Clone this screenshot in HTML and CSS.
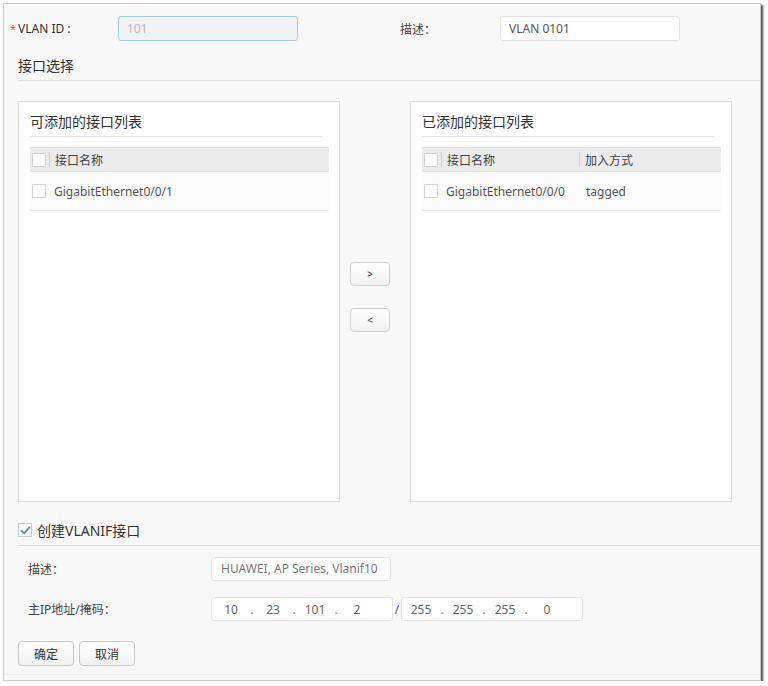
FILE: index.html
```html
<!DOCTYPE html>
<html lang="zh">
<head>
<meta charset="utf-8">
<title>VLAN</title>
<link rel="stylesheet" href="styles.css">
</head>
<body>
<div class="dialog">
  <div class="top-row">
    <span class="req">*</span>
    <span class="lbl lbl-id">VLAN ID :</span>
    <div class="field field-disabled">101</div>
    <span class="lbl lbl-desc">描述：</span>
    <div class="field">VLAN 0101</div>
  </div>

  <div class="section-title">接口选择</div>

  <div class="transfer">
    <div class="panel">
      <div class="panel-title">可添加的接口列表</div>
      <div class="table">
        <div class="thead">
          <span class="cb"></span>
          <span class="sep"></span>
          <span class="th th-name">接口名称</span>
        </div>
        <div class="trow">
          <span class="cb"></span>
          <span class="td td-name">GigabitEthernet0/0/1</span>
        </div>
      </div>
    </div>

    <div class="mid">
      <button class="arrow-btn">&gt;</button>
      <button class="arrow-btn">&lt;</button>
    </div>

    <div class="panel">
      <div class="panel-title">已添加的接口列表</div>
      <div class="table">
        <div class="thead">
          <span class="cb"></span>
          <span class="sep"></span>
          <span class="th th-name">接口名称</span>
          <span class="sep sep2"></span>
          <span class="th">加入方式</span>
        </div>
        <div class="trow">
          <span class="cb"></span>
          <span class="td td-name">GigabitEthernet0/0/0</span>
          <span class="td td-mode">tagged</span>
        </div>
      </div>
    </div>
  </div>

  <div class="vlanif">
    <span class="cb cb-checked">
      <svg width="11" height="11" viewBox="0 0 11 11"><path d="M1.5 5.8 L4.2 8.4 L9.6 2.2" fill="none" stroke="#3f8fd6" stroke-width="1.8" stroke-linecap="round" stroke-linejoin="round"/></svg>
    </span>
    <span class="vlanif-text">创建VLANIF接口</span>
  </div>

  <div class="form-row row-desc">
    <span class="form-lbl">描述：</span>
    <div class="field field-long">HUAWEI, AP Series, Vlanif10</div>
  </div>

  <div class="form-row row-ip">
    <span class="form-lbl">主IP地址/掩码：</span>
    <div class="ip ip-addr">
      <span class="oct">10</span><span class="dot">.</span><span class="oct">23</span><span class="dot">.</span><span class="oct">101</span><span class="dot">.</span><span class="oct">2</span>
    </div>
    <span class="slash">/</span>
    <div class="ip ip-mask">
      <span class="oct">255</span><span class="dot">.</span><span class="oct">255</span><span class="dot">.</span><span class="oct">255</span><span class="dot">.</span><span class="oct">0</span>
    </div>
  </div>

  <div class="actions">
    <button class="btn">确定</button>
    <button class="btn">取消</button>
  </div>
</div>
</body>
</html>
```

FILE: styles.css
```css
* { box-sizing: border-box; }

html, body {
  margin: 0;
  padding: 0;
  background: #ffffff;
}

body {
  font-family: "Noto Sans", "Noto Sans CJK SC", sans-serif;
  font-size: 12px;
  color: #333;
}

.dialog {
  margin: 3px 0 0 3px;
  width: 758px;
  height: 678px;
  border: 1px solid #c8c8c8;
  background: #f8f8f8;
  box-shadow: 2px 2px 2px rgba(40, 40, 40, 0.85);
  padding-top: 12px;
  position: relative;
}

.dialog::after {
  content: "";
  position: absolute;
  left: 0;
  right: 0;
  bottom: 5px;
  border-top: 1px solid #ececec;
}

/* top row */
.top-row {
  display: flex;
  align-items: center;
  height: 25px;
  padding-left: 6px;
}

.req {
  color: #d9534f;
  width: 8px;
  font-size: 11px;
}

.lbl { color: #333; }
.lbl-id { width: 100px; }
.lbl-desc { width: 100px; margin-left: 102px; color: #444; }

.field {
  width: 180px;
  height: 25px;
  border: 1px solid #e3e3e3;
  border-radius: 3px;
  background: #fff;
  color: #555;
  line-height: 23px;
  padding-left: 8px;
  white-space: nowrap;
  overflow: hidden;
}

.field-disabled {
  border-color: #9fcbe8;
  background: #f1f2f3;
  color: #b8b8b8;
}

/* section title */
.section-title {
  margin: 15px 0 0 14px;
  height: 25px;
  line-height: 20px;
  font-size: 14px;
  color: #333;
  border-bottom: 1px solid #e2e2e2;
}

/* transfer */
.transfer {
  display: flex;
  margin: 20px 0 0 14px;
  height: 401px;
}

.panel {
  width: 322px;
  height: 401px;
  border: 1px solid #dddddd;
  background: #ffffff;
  padding: 10px 0 0 11px;
}

.panel-title {
  width: 292px;
  height: 25px;
  line-height: 20px;
  font-size: 14px;
  color: #333;
  border-bottom: 1px solid #e6e6e6;
}

.table {
  margin-top: 10px;
  width: 299px;
}

.thead {
  display: flex;
  align-items: center;
  height: 25px;
  background: #ebebeb;
  border-top: 1px solid #e0e0e0;
  border-bottom: 1px solid #e2e2e2;
  padding-left: 2px;
}

.trow {
  display: flex;
  align-items: center;
  height: 39px;
  background: #fbfbfb;
  border-bottom: 1px solid #e6e6e6;
  padding-left: 2px;
}

.cb {
  display: inline-flex;
  align-items: center;
  justify-content: center;
  width: 14px;
  height: 14px;
  border: 1px solid #d4d4d4;
  background: #fff;
  flex: none;
}

.sep {
  width: 1px;
  height: 15px;
  background: #d0d0d0;
  margin-left: 3px;
  flex: none;
}

.th { color: #444; }
.th-name { margin-left: 5px; width: 132px; }
.sep2 { margin-left: 0; }
.sep2 + .th { margin-left: 5px; }

.td { color: #555; }
.td-name { margin-left: 8px; width: 132px; white-space: nowrap; }
.td-mode { margin-left: 8px; }

.mid {
  width: 70px;
  display: flex;
  flex-direction: column;
  align-items: flex-start;
  padding: 161px 0 0 10px;
  gap: 22px;
}

.arrow-btn {
  width: 40px;
  height: 24px;
  border: 1px solid #cfcfcf;
  border-radius: 4px;
  background: linear-gradient(#ffffff, #f2f2f2);
  font-family: "Noto Sans", sans-serif;
  font-size: 10px;
  color: #333;
  padding: 0;
  line-height: 22px;
}

/* vlanif */
.vlanif {
  display: flex;
  align-items: center;
  margin: 18px 0 0 14px;
  height: 26px;
  padding-bottom: 5px;
  border-bottom: 1px solid #e0e0e0;
  box-shadow: 0 1px 0 #ffffff;
}

.cb-checked {
  width: 14px;
  height: 14px;
  border-color: #c6cfd8;
}

.vlanif-text {
  margin-left: 5px;
  font-size: 14px;
  color: #333;
}

.form-row {
  display: flex;
  align-items: center;
  height: 24px;
  padding-left: 24px;
}

.row-desc { margin-top: 11px; }
.row-ip { margin-top: 16px; }

.form-lbl {
  width: 183px;
  color: #444;
}

.field-long {
  height: 24px;
  line-height: 22px;
  padding-left: 9px;
  color: #777;
}

.ip {
  display: flex;
  align-items: center;
  height: 24px;
  border: 1px solid #e3e3e3;
  border-radius: 3px;
  background: #fff;
  padding-left: 4px;
  color: #666;
}

.ip-addr { width: 182px; }
.ip-mask { width: 182px; }

.oct {
  width: 30px;
  text-align: center;
}

.dot {
  width: 12px;
  text-align: center;
  color: #777;
}

.slash {
  width: 8px;
  text-align: center;
  color: #555;
}

.actions {
  display: flex;
  gap: 5px;
  margin: 20px 0 0 14px;
}

.btn {
  width: 56px;
  height: 25px;
  border: 1px solid #c8c8c8;
  border-radius: 4px;
  background: linear-gradient(#ffffff, #f1f1f1);
  font-family: "Noto Sans", "Noto Sans CJK SC", sans-serif;
  font-size: 12px;
  color: #333;
  padding: 0;
}
```
